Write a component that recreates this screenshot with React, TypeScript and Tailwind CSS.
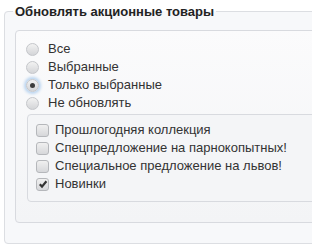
import React from "react";

const modes = ["Все", "Выбранные", "Только выбранные", "Не обновлять"];

const groups = [
  { name: "Прошлогодняя коллекция", checked: false },
  { name: "Спецпредложение на парнокопытных!", checked: false },
  { name: "Специальное предложение на львов!", checked: false },
  { name: "Новинки", checked: true },
];

const Radio = ({ checked }: { checked: boolean }) => (
  <span
    className={
      "relative flex h-[13px] w-[13px] shrink-0 items-center justify-center rounded-full border border-[#c4c6ca] bg-gradient-to-b from-[#f2f2f2] to-[#d4d5d8] " +
      (checked ? "shadow-[0_0_3px_2px_#b9d4f0]" : "")
    }
  >
    {checked && <span className="h-[5px] w-[5px] rounded-full bg-[#3c3c3c]" />}
  </span>
);

const Checkbox = ({ checked }: { checked: boolean }) => (
  <span className="relative flex h-[13px] w-[13px] shrink-0 items-center justify-center rounded-[3px] border border-[#b5b7bb] bg-gradient-to-b from-[#f0f0f0] to-[#d6d7da]">
    {checked && (
      <svg width="10" height="10" viewBox="0 0 10 10">
        <path d="M1.8 5.2 L4 7.6 L8.4 2.2" fill="none" stroke="#333" strokeWidth="2.2" />
      </svg>
    )}
  </span>
);

export default function App() {
  return (
    <div className="h-[250px] w-[312px] overflow-hidden bg-white font-['Liberation_Sans',Arial,sans-serif] text-[13px] text-[#333]">
      <fieldset className="ml-1 mt-1 w-[340px] rounded-[4px] border border-[#dcdee2] bg-[#f7f8fa] pb-5 pl-[10px] pt-[11px]">
        <legend className="-ml-[2px] px-[2px] text-[13px] font-bold leading-[15px] text-[#222]">
          Обновлять акционные товары
        </legend>
        <div className="rounded-[4px] border border-[#d8dadf] bg-gradient-to-b from-[#fbfbfc] to-[#f3f4f6] pb-5 pl-[10px] pt-[9px]">
          <div className="flex flex-col">
            {modes.map((m, i) => (
              <label key={m} className="flex h-[18px] items-center gap-[9px]">
                <Radio checked={i === 2} />
                <span>{m}</span>
              </label>
            ))}
          </div>
          <div className="ml-[1px] mt-[2px] rounded-[4px] border border-[#d8dadf] bg-[#f4f5f7] pb-[8px] pl-[8px] pt-[6px]">
            {groups.map((g) => (
              <label key={g.name} className="flex h-[18px] items-center gap-[6px]">
                <Checkbox checked={g.checked} />
                <span>{g.name}</span>
              </label>
            ))}
          </div>
        </div>
      </fieldset>
    </div>
  );
}
